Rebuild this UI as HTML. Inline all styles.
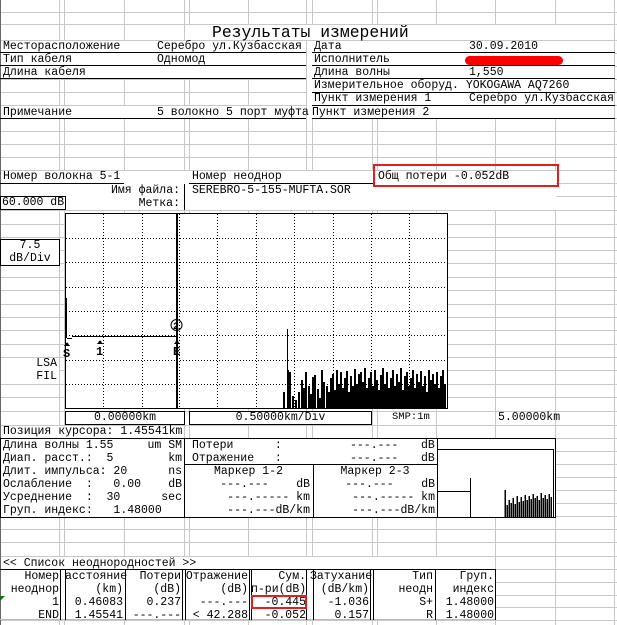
<!DOCTYPE html>
<html><head><meta charset="utf-8">
<style>
body{margin:0;width:617px;height:625px;overflow:hidden;background:#fff;position:relative;font-family:"Liberation Mono",monospace;}
.t{position:absolute;font-family:"Liberation Mono",monospace;font-size:11.5px;line-height:13px;white-space:pre;color:#000;}
.r{text-align:right;}
.c{text-align:center;}
.h{position:absolute;height:1px;background:#000;}
.v{position:absolute;width:1px;background:#000;}
.b{position:absolute;border:1px solid #000;box-sizing:border-box;background:#fff;}
.w{position:absolute;background:#fff;}
</style></head><body>
<svg width="617" height="625" style="position:absolute;left:0;top:0" stroke="#c8c8c8" stroke-width="1" shape-rendering="crispEdges">
<g>
<line x1="59.5" y1="0" x2="59.5" y2="625"/><line x1="64.5" y1="0" x2="64.5" y2="625"/>
<line x1="124.5" y1="0" x2="124.5" y2="625"/><line x1="184.5" y1="0" x2="184.5" y2="625"/>
<line x1="189.5" y1="0" x2="189.5" y2="625"/><line x1="248.5" y1="0" x2="248.5" y2="625"/>
<line x1="306.5" y1="0" x2="306.5" y2="625"/><line x1="312.5" y1="0" x2="312.5" y2="625"/>
<line x1="372.5" y1="0" x2="372.5" y2="625"/><line x1="377.5" y1="0" x2="377.5" y2="625"/>
<line x1="436.5" y1="0" x2="436.5" y2="625"/><line x1="495.5" y1="0" x2="495.5" y2="625"/>
<line x1="555.5" y1="0" x2="555.5" y2="625"/><line x1="614.5" y1="0" x2="614.5" y2="625"/>
</g>
<g>
<line x1="0" y1="12.5" x2="617" y2="12.5"/><line x1="0" y1="24.5" x2="617" y2="24.5"/>
<line x1="0" y1="40.5" x2="617" y2="40.5"/>
<line x1="0" y1="53.5" x2="617" y2="53.5"/><line x1="0" y1="66.5" x2="617" y2="66.5"/>
<line x1="0" y1="79.5" x2="617" y2="79.5"/><line x1="0" y1="92.5" x2="617" y2="92.5"/>
<line x1="0" y1="105.5" x2="617" y2="105.5"/><line x1="0" y1="118.5" x2="617" y2="118.5"/>
<line x1="0" y1="131.5" x2="617" y2="131.5"/><line x1="0" y1="144.5" x2="617" y2="144.5"/>
<line x1="0" y1="157.5" x2="617" y2="157.5"/><line x1="0" y1="170.5" x2="617" y2="170.5"/>
<line x1="0" y1="183.5" x2="617" y2="183.5"/><line x1="0" y1="196.5" x2="617" y2="196.5"/>
<line x1="0" y1="210.5" x2="617" y2="210.5"/><line x1="0" y1="224.5" x2="617" y2="224.5"/>
<line x1="0" y1="237.5" x2="617" y2="237.5"/><line x1="0" y1="250.5" x2="617" y2="250.5"/>
<line x1="0" y1="263.5" x2="617" y2="263.5"/><line x1="0" y1="277.5" x2="617" y2="277.5"/>
<line x1="0" y1="290.5" x2="617" y2="290.5"/><line x1="0" y1="304.5" x2="617" y2="304.5"/>
<line x1="0" y1="317.5" x2="617" y2="317.5"/><line x1="0" y1="330.5" x2="617" y2="330.5"/>
<line x1="0" y1="344.5" x2="617" y2="344.5"/><line x1="0" y1="357.5" x2="617" y2="357.5"/>
<line x1="0" y1="370.5" x2="617" y2="370.5"/><line x1="0" y1="384.5" x2="617" y2="384.5"/>
<line x1="0" y1="397.5" x2="617" y2="397.5"/><line x1="0" y1="411.5" x2="617" y2="411.5"/>
<line x1="0" y1="425.5" x2="617" y2="425.5"/><line x1="0" y1="438.5" x2="617" y2="438.5"/>
<line x1="0" y1="451.5" x2="617" y2="451.5"/><line x1="0" y1="464.5" x2="617" y2="464.5"/>
<line x1="0" y1="477.5" x2="617" y2="477.5"/><line x1="0" y1="490.5" x2="617" y2="490.5"/>
<line x1="0" y1="503.5" x2="617" y2="503.5"/><line x1="0" y1="516.5" x2="617" y2="516.5"/>
<line x1="0" y1="529.5" x2="617" y2="529.5"/><line x1="0" y1="542.5" x2="617" y2="542.5"/>
<line x1="0" y1="556.5" x2="617" y2="556.5"/><line x1="0" y1="569.5" x2="617" y2="569.5"/>
<line x1="0" y1="582.5" x2="617" y2="582.5"/><line x1="0" y1="595.5" x2="617" y2="595.5"/>
<line x1="0" y1="607.5" x2="617" y2="607.5"/><line x1="0" y1="620.5" x2="617" y2="620.5"/>
</g>
<line x1="0.5" y1="0" x2="0.5" y2="625" stroke="#666"/>
</svg>

<div class="w" style="left:185px;top:25px;width:429px;height:15px"></div>
<div class="t" style="left:212px;top:24px;font-size:16.4px;line-height:17px;">Результаты измерений</div>

<div class="w" style="left:1px;top:41px;width:305px;height:38px"></div>
<div class="w" style="left:1px;top:106px;width:305px;height:13px"></div>
<div class="w" style="left:307px;top:41px;width:307px;height:78px"></div>
<div class="t" style="left:3px;top:40px">Месторасположение</div>
<div class="t" style="left:157px;top:40px">Серебро ул.Кузбасская</div>
<div class="t" style="left:3px;top:53px">Тип кабеля</div>
<div class="t" style="left:157px;top:53px">Одномод</div>
<div class="t" style="left:3px;top:66px">Длина кабеля</div>
<div class="t" style="left:3px;top:106px">Примечание</div>
<div class="t" style="left:157px;top:106px">5 волокно 5 порт муфта</div>
<div class="t" style="left:314px;top:40px">Дата</div>
<div class="t" style="left:469px;top:40px">30.09.2010</div>
<div class="t" style="left:314px;top:53px">Исполнитель</div>
<div style="position:absolute;left:465px;top:56px;width:98px;height:9px;border-radius:5px;background:#f00"></div>
<div class="t" style="left:314px;top:66px">Длина волны</div>
<div class="t" style="left:469px;top:66px">1,550</div>
<div class="t" style="left:314px;top:79px">Измерительное оборуд. YOKOGAWA AQ7260</div>
<div class="t" style="left:314px;top:92px">Пункт измерения 1</div>
<div class="t" style="left:469px;top:92px">Серебро ул.Кузбасская</div>
<div class="t" style="left:312px;top:106px">Пункт измерения 2</div>
<div class="h" style="left:0;top:52px;width:306px"></div><div class="h" style="left:312px;top:52px;width:303px"></div>
<div class="h" style="left:0;top:65px;width:306px"></div><div class="h" style="left:312px;top:65px;width:303px"></div>
<div class="h" style="left:0;top:78px;width:306px"></div><div class="h" style="left:312px;top:78px;width:303px"></div>
<div class="h" style="left:312px;top:92px;width:303px"></div>
<div class="h" style="left:312px;top:105px;width:303px"></div>
<div class="h" style="left:0;top:118px;width:306px"></div><div class="h" style="left:312px;top:118px;width:303px"></div>

<div class="w" style="left:1px;top:171px;width:555px;height:39px"></div>
<div class="t" style="left:3px;top:170px">Номер волокна 5-1</div>
<div class="t" style="left:192px;top:170px">Номер неоднор</div>
<div class="t" style="left:378px;top:170px">Общ потери -0.052dB</div>
<div style="position:absolute;left:373px;top:164px;width:186px;height:23px;border:2px solid #e02020;box-sizing:border-box"></div>
<div class="h" style="left:0;top:183px;width:124px"></div>
<div class="h" style="left:189px;top:183px;width:184px"></div>
<div class="t r" style="left:60px;top:184px;width:120px">Имя файла:</div>
<div class="t" style="left:192px;top:184px">SEREBRO-5-155-MUFTA.SOR</div>
<div class="v" style="left:184px;top:184px;height:26px"></div>
<div class="t r" style="left:60px;top:197px;width:120px">Метка:</div>
<div class="b" style="left:0;top:196px;width:66px;height:14px"></div>
<div class="t" style="left:2px;top:196px">60.000 dB</div>

<div class="b" style="left:0;top:239px;width:60px;height:27px"></div>
<div class="t c" style="left:0;top:239px;width:60px">7.5
dB/Div</div>
<div class="w" style="left:1px;top:358px;width:58px;height:26px"></div>
<div class="t r" style="left:0;top:357px;width:57px">LSA
FIL</div>

<svg width="617" height="625" style="position:absolute;left:0;top:0" shape-rendering="crispEdges">
<rect x="65.5" y="213.5" width="382" height="195" fill="#fff" stroke="#000"/>
<g stroke="#000" stroke-dasharray="1,2" stroke-width="1">
<line x1="103.5" y1="214" x2="103.5" y2="408"/><line x1="142.5" y1="214" x2="142.5" y2="408"/>
<line x1="179.5" y1="214" x2="179.5" y2="408"/><line x1="217.5" y1="214" x2="217.5" y2="408"/>
<line x1="256.5" y1="214" x2="256.5" y2="408"/><line x1="294.5" y1="214" x2="294.5" y2="408"/>
<line x1="333.5" y1="214" x2="333.5" y2="408"/><line x1="371.5" y1="214" x2="371.5" y2="408"/>
<line x1="409.5" y1="214" x2="409.5" y2="408"/>
<line x1="66" y1="238.5" x2="447" y2="238.5"/><line x1="66" y1="262.5" x2="447" y2="262.5"/>
<line x1="66" y1="287.5" x2="447" y2="287.5"/><line x1="66" y1="311.5" x2="447" y2="311.5"/>
<line x1="66" y1="335.5" x2="447" y2="335.5"/><line x1="66" y1="360.5" x2="447" y2="360.5"/>
<line x1="66" y1="384.5" x2="447" y2="384.5"/>
</g>
<g stroke="#000" fill="none">
<path d="M66.5 298 V338 M67 338.5 H72 M72 336.5 H177"/>
<line x1="177" y1="213" x2="177" y2="408" stroke-width="2"/>
<circle cx="176.5" cy="325" r="5.5" shape-rendering="auto"/>
<path d="M287.5 408 V329 M288.5 408 V370" stroke-width="1"/>
<path stroke-width="1.6" d="M284 408 V392 M290 408 V372 M293 408 V396 M296 408 V400 M299 408 V392 M302 408 V380 M304 408 V388 M306 408 V372 M309 408 V386 M311 408 V394 M313 408 V377 M315 408 V375 M318 408 V389 M320 408 V398 M322 408 V370 M324 408 V382 M327 408 V386 M329 408 V392 M331 408 V378 M333 408 V374 M335 408 V390 M337 408 V370 M339 408 V384 M341 408 V372 M343 408 V388 M345 408 V378 M347 408 V371 M349 408 V392 M351 408 V376 M353 408 V386 M355 408 V369 M357 408 V384 M359 408 V374 M361 408 V372 M363 408 V382 M365 408 V368 M367 408 V388 M369 408 V378 M371 408 V372 M373 408 V386 M375 408 V370 M377 408 V380 M379 408 V390 M381 408 V375 M383 408 V368 M385 408 V384 M387 408 V372 M389 408 V388 M391 408 V378 M393 408 V370 M395 408 V386 M397 408 V374 M399 408 V382 M401 408 V368 M403 408 V390 M405 408 V376 M407 408 V372 M409 408 V386 M411 408 V378 M413 408 V370 M415 408 V388 M417 408 V374 M419 408 V382 M421 408 V371 M423 408 V386 M425 408 V376 M427 408 V392 M429 408 V370 M431 408 V380 M433 408 V374 M435 408 V384 M437 408 V372 M439 408 V388 M441 408 V376 M443 408 V370 M445 408 V384"/>
</g>
<g font-family="Liberation Mono" font-size="12" font-weight="bold" fill="#000">
<text x="63" y="357">S</text><text x="96" y="355">1</text><text x="173" y="355">E</text>
<text x="173" y="329" font-size="10">2</text>
<path d="M67 342 l-3 4 h6z M100 340 l-3 4 h6z M177 340 l-3 4 h6z" fill="#000"/>
</g>
</svg>

<div class="b" style="left:65px;top:411px;width:120px;height:14px"></div>
<div class="t c" style="left:65px;top:411px;width:120px">0.00000km</div>
<div class="b" style="left:189px;top:411px;width:183px;height:14px"></div>
<div class="t c" style="left:189px;top:411px;width:183px">0.50000km/Div</div>
<div class="t" style="left:392px;top:411px;font-size:10.5px">SMP:1m</div>
<div class="t" style="left:498px;top:411px">5.00000km</div>

<div class="w" style="left:1px;top:426px;width:183px;height:12px"></div>
<div class="t" style="left:3px;top:425px">Позиция курсора: 1.45541km</div>

<div class="b" style="left:0;top:438px;width:185px;height:80px"></div>
<div class="t" style="left:3px;top:439px">Длина волны 1.55</div><div class="t r" style="left:100px;top:439px;width:82px">um SM</div>
<div class="t" style="left:3px;top:452px">Диап. расст.:  5</div><div class="t r" style="left:100px;top:452px;width:82px">km</div>
<div class="t" style="left:3px;top:465px">Длит. импульса: 20</div><div class="t r" style="left:100px;top:465px;width:82px">ns</div>
<div class="t" style="left:3px;top:478px">Ослабление  :   0.00</div><div class="t r" style="left:100px;top:478px;width:82px">dB</div>
<div class="t" style="left:3px;top:491px">Усреднение  :  30</div><div class="t r" style="left:100px;top:491px;width:82px">sec</div>
<div class="t" style="left:3px;top:504px">Груп. индекс:   1.48000</div>

<div class="b" style="left:184px;top:438px;width:254px;height:80px"></div>
<div class="h" style="left:184px;top:464px;width:253px"></div>
<div class="v" style="left:313px;top:464px;height:53px"></div>
<div class="t" style="left:192px;top:439px">Потери      :</div>
<div class="t" style="left:350px;top:439px">---.---</div><div class="t" style="left:421px;top:439px">dB</div>
<div class="t" style="left:192px;top:452px">Отражение   :</div>
<div class="t" style="left:350px;top:452px">---.---</div><div class="t" style="left:421px;top:452px">dB</div>
<div class="t c" style="left:184px;top:465px;width:129px">Маркер 1-2</div>
<div class="t c" style="left:313px;top:465px;width:124px">Маркер 2-3</div>
<div class="t r" style="left:184px;top:478px;width:126px">---.---    dB</div>
<div class="t r" style="left:313px;top:478px;width:122px">---.---    dB</div>
<div class="t r" style="left:184px;top:491px;width:126px">---.----- km</div>
<div class="t r" style="left:313px;top:491px;width:122px">---.----- km</div>
<div class="t r" style="left:184px;top:504px;width:126px">---.---dB/km</div>
<div class="t r" style="left:313px;top:504px;width:122px">---.---dB/km</div>

<div class="b" style="left:437px;top:438px;width:119px;height:80px"></div>
<svg width="617" height="625" style="position:absolute;left:0;top:0" shape-rendering="crispEdges">
<g stroke="#000" fill="none">
<path d="M438 449.5 H553.5 V517"/>
<path d="M438 491.5 H470.5 M470.5 478 V517"/>
<path stroke-width="1.5" d="M505 517 V490 M507 517 V505 M509 517 V500 M511 517 V503 M513 517 V498 M515 517 V504 M517 517 V496 M519 517 V502 M521 517 V497 M523 517 V501 M525 517 V495 M527 517 V500 M529 517 V496 M531 517 V499 M533 517 V494 M535 517 V498 M537 517 V496 M539 517 V500 M541 517 V493 M543 517 V498 M545 517 V495 M547 517 V499 M549 517 V494 M551 517 V497"/>
</g>
</svg>

<div class="w" style="left:1px;top:557px;width:494px;height:63px"></div>
<div class="t" style="left:3px;top:557px">&lt;&lt; Список неоднородностей &gt;&gt;</div>
<div class="h" style="left:0;top:569px;width:496px"></div>
<div class="h" style="left:0;top:619px;width:496px;background:#bbb"></div>
<div class="v" style="left:60px;top:570px;height:50px"></div>
<div class="v" style="left:65px;top:570px;height:50px"></div>
<div class="v" style="left:125px;top:570px;height:50px"></div>
<div class="v" style="left:182px;top:570px;height:50px"></div>
<div class="v" style="left:185px;top:570px;height:50px"></div>
<div class="v" style="left:249px;top:570px;height:50px"></div>
<div class="v" style="left:251px;top:570px;height:50px"></div>
<div class="v" style="left:306px;top:570px;height:50px"></div>
<div class="v" style="left:313px;top:570px;height:50px"></div>
<div class="v" style="left:370px;top:570px;height:50px"></div>
<div class="v" style="left:373px;top:570px;height:50px"></div>
<div class="v" style="left:435px;top:570px;height:50px"></div>
<div class="v" style="left:495px;top:570px;height:50px"></div>
<div class="t r" style="left:0;top:570px;width:59px">Номер
неоднор
1
END</div>
<div class="t r" style="left:65px;top:570px;width:58px">асстояние
(km)
0.46083
1.45541</div>
<div class="t r" style="left:125px;top:570px;width:56px">Потери
(dB)
0.237
---.---</div>
<div class="t r" style="left:185px;top:570px;width:63px">Отражение
(dB)
---.---
&lt; 42.288</div>
<div class="t r" style="left:251px;top:570px;width:55px">Сум.
п-ри(dB)
-0.445
-0.052</div>
<div class="t r" style="left:310px;top:570px;width:59px">Затухание
(dB/km)
-1.036
0.157</div>
<div class="t r" style="left:373px;top:570px;width:60px">Тип
неодн
S+
R</div>
<div class="t r" style="left:435px;top:570px;width:59px">Груп.
индекс
1.48000
1.48000</div>
<div style="position:absolute;left:251px;top:595px;width:56px;height:14px;border:2px solid #e02020;box-sizing:border-box"></div>
<div style="position:absolute;left:0;top:596px;width:0;height:0;border-top:5px solid #1a6b1a;border-right:5px solid transparent"></div>
</body></html>
